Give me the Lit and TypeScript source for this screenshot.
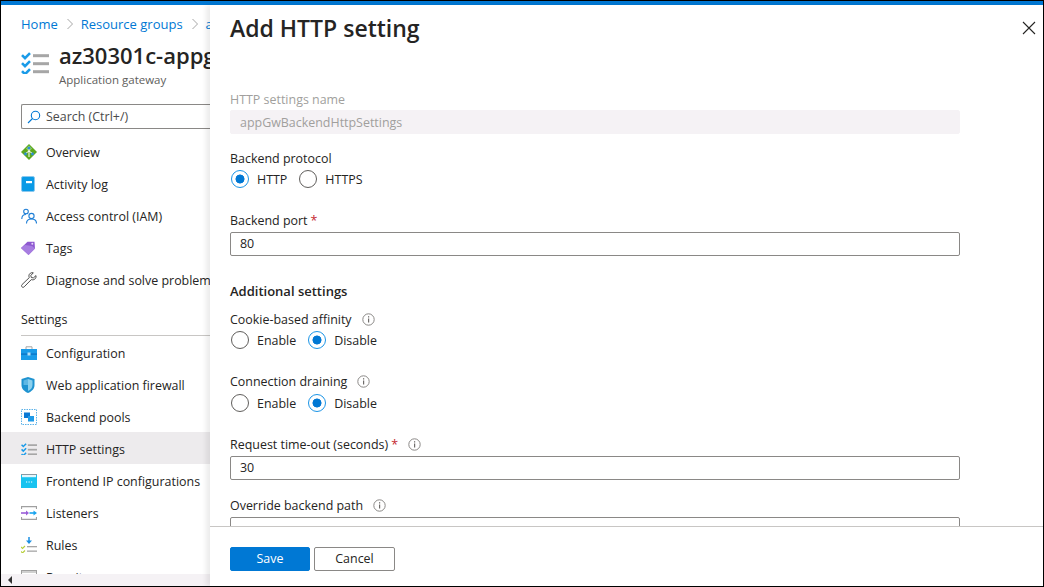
import { LitElement, html, css, svg } from 'lit';
import { customElement } from 'lit/decorators.js';

const checklist = (s: number) => html`<svg width=${s} height=${s * 0.8} viewBox="0 0 28 22">
  <g fill="none" stroke="#1a9be8" stroke-width="2.6">
    <path d="M1 3l3 3 5-5M1 11l3 3 5-5M1 19l3 3 5-5" />
  </g>
  <g fill="#a6a6a6">
    <rect x="12" y="2" width="16" height="3" /><rect x="12" y="10" width="16" height="3" /><rect x="12" y="18" width="16" height="3" />
  </g>
</svg>`;

const icons: Record<string, unknown> = {
  overview: html`<svg width="16" height="16" viewBox="0 0 16 16">
    <path d="M8 0l8 8-8 8-8-8z" fill="#5ca81e" />
    <path d="M8 1.500L11 4.500 8 8 5 4.500z" fill="#9bd35a" />
    <path d="M8 3v10M8 7L4.500 9.500M8 7l3.500 2.500" stroke="#fff" stroke-width="1" fill="none" />
    <circle cx="8" cy="4" r="1.600" fill="#2f8fd8" /><circle cx="4.500" cy="10" r="1.400" fill="#2f8fd8" /><circle cx="11.500" cy="10" r="1.400" fill="#2f8fd8" />
  </svg>`,
  activity: html`<svg width="14" height="16" viewBox="0 0 14 16">
    <rect x="0.500" y="0.500" width="13" height="15" rx="1.500" fill="#0a9ae6" stroke="#8cc8ee" />
    <rect x="5" y="5" width="6" height="2.200" fill="#fff" />
  </svg>`,
  iam: html`<svg width="16" height="16" viewBox="0 0 16 16" fill="none" stroke="#1f7fd6" stroke-width="1.100">
    <circle cx="5" cy="3.500" r="2.300" /><path d="M.8 11c0-3 1.800-4.500 4.200-4.500" />
    <circle cx="10.500" cy="8" r="2.600" /><path d="M5.500 15.500c0-3 2-4.500 5-4.500s5 1.500 5 4.500" />
  </svg>`,
  tags: html`<svg width="14" height="14" viewBox="0 0 14 14">
    <path d="M0 7L6.500.8 13.500 0.800 14 7.500 7.500 14z" fill="#8e58d0" />
    <path d="M0 7L7.500 14 14 7.500 11 5 4 4z" fill="#a77de0" />
    <circle cx="11.300" cy="2.800" r="1" fill="#e6d8f8" />
  </svg>`,
  wrench: html`<svg width="16" height="16" viewBox="0 0 16 16" fill="none" stroke="#3a3a3a" stroke-width="0.900">
    <path d="M15 3.600l-2.600 2.300-2.100-.4-.5-2L12.300.8C10.200.2 8 1.500 7.900 3.800c0 .7.100 1.200.4 1.800L1 12.600c-.8.900-.5 1.800 0 2.300s1.500.7 2.200-.1l7.100-7.200c2.600 1 5.300-1.100 4.700-4z" />
  </svg>`,
  config: html`<svg width="16" height="14" viewBox="0 0 16 14">
    <path d="M5 3V.8h6V3" fill="none" stroke="#a6a6a6" stroke-width="1" />
    <rect y="3" width="16" height="11" fill="#1a9be8" />
    <rect y="7.500" width="16" height="1.200" fill="#0b6fc0" />
    <rect x="6.500" y="6.500" width="3" height="3" fill="#b7e0f7" />
  </svg>`,
  waf: html`<svg width="14" height="16" viewBox="0 0 14 16">
    <path d="M7 0l6.500 2v6c0 4-3 6.500-6.500 8C3.500 14.500.5 12 .5 8V2z" fill="#1f93d0" />
    <path d="M7 2l4.500 1.500V8c0 3-2 4.700-4.500 6z" fill="#8bd0ee" />
    <path d="M2.500 3.500L7 2v6H2.500z" fill="#5fb8e4" />
  </svg>`,
  pools: html`<svg width="16" height="16" viewBox="0 0 16 16">
    <rect x="0.500" y="0.500" width="15" height="15" fill="none" stroke="#5cb2e8" stroke-dasharray="1.500 1" />
    <rect x="3" y="3.500" width="6" height="5.500" fill="#0a78d4" />
    <rect x="7" y="7" width="6" height="5.500" fill="#1f9be8" />
  </svg>`,
  http: checklist(16),
  frontend: html`<svg width="16" height="14" viewBox="0 0 16 14">
    <rect width="16" height="14" fill="#18c3f0" />
    <rect x="1" y="1" width="14" height="2.200" fill="#e6f7fd" />
    <rect y="0" width="16" height="1" fill="#8a9aa3" />
    <path d="M5 8h1.200M7.500 8h1.200M10 8h1.200" stroke="#fff" stroke-width="1.200" />
  </svg>`,
  listeners: html`<svg width="16" height="14" viewBox="0 0 16 14">
    <path d="M.5 3V.6h15V3M.5 11v2.400h15V11" fill="none" stroke="#a0a0a0" stroke-width="1.200" />
    <path d="M0 7h5.500" stroke="#9a5fd8" stroke-width="1.600" /><path d="M5 4.500L8 7l-3 2.500z" fill="#9a5fd8" />
    <path d="M8.500 7H13" stroke="#18a3ee" stroke-width="1.600" /><path d="M12.500 4.500L16 7l-3.500 2.500z" fill="#18a3ee" />
  </svg>`,
  rules: html`<svg width="16" height="16" viewBox="0 0 16 16">
    <path d="M8 0v5" stroke="#1a8fe3" stroke-width="1.500" /><path d="M5 3.500h6L8 7z" fill="#1a8fe3" />
    <path d="M0 10l1.500 1.500L4 9M0 14.500L1.500 16 4 13.500" fill="none" stroke="#b7cf3a" stroke-width="1.100" />
    <rect x="6" y="9" width="10" height="1.300" fill="#a6a6a6" /><rect x="6" y="13.500" width="10" height="1.300" fill="#a6a6a6" />
  </svg>`,
  rewrites: html`<svg width="16" height="14" viewBox="0 0 16 14">
    <rect x="0.500" y="0.500" width="15" height="13" fill="#fff" stroke="#a0a0a0" />
    <rect x="1" y="1" width="14" height="2" fill="#d0d0d0" />
  </svg>`,
};

const menuTop = [
  ['overview', 'Overview'],
  ['activity', 'Activity log'],
  ['iam', 'Access control (IAM)'],
  ['tags', 'Tags'],
  ['wrench', 'Diagnose and solve problems'],
];
const menuSettings = [
  ['config', 'Configuration'],
  ['waf', 'Web application firewall'],
  ['pools', 'Backend pools'],
  ['http', 'HTTP settings'],
  ['frontend', 'Frontend IP configurations'],
  ['listeners', 'Listeners'],
  ['rules', 'Rules'],
  ['rewrites', 'Rewrites'],
];

const info = svg`<svg class="info" width="13" height="13" viewBox="0 0 13 13">
  <circle cx="6.500" cy="6.500" r="5.700" fill="none" stroke="#8a8886" />
  <rect x="6" y="5.500" width="1.200" height="4" fill="#6e6c6a" /><rect x="6" y="3.200" width="1.200" height="1.300" fill="#6e6c6a" />
</svg>`;

@customElement('app-root')
export class AppRoot extends LitElement {
  static styles = css`
    :host {
      display: block;
      height: 587px;
      box-sizing: border-box;
      border: 1px solid #000;
      font-family: 'Open Sans', 'Noto Sans', sans-serif;
      font-size: 12.450px;
      color: #252423;
      background: #fff;
      overflow: hidden;
    }
    .topbar {
      height: 4px;
      background: #0078d4;
    }
    .main {
      display: flex;
      height: 581px;
    }
    /* left blade behind the panel */
    .blade {
      width: 209px;
      flex: none;
      display: flex;
      flex-direction: column;
      overflow: hidden;
      white-space: nowrap;
    }
    .crumbs {
      display: flex;
      align-items: center;
      padding: 10px 0 0 20px;
      height: 18px;
      color: #0078d4;
      font-size: 13px;
    }
    .chev {
      width: 6px;
      height: 10px;
      margin: 0 8px 0 9px;
      flex: none;
    }
    .head {
      display: flex;
      gap: 10px;
      padding: 9px 0 0 20px;
      height: 52px;
      box-sizing: border-box;
    }
    .head-icon {
      padding-top: 10px;
    }
    .head h1 {
      margin: 0;
      font-size: 22px;
      line-height: 27px;
      font-weight: 600;
      color: #252423;
    }
    .head p {
      margin: 3px 0 0;
      font-size: 11.500px;
      line-height: 15px;
      color: #605e5c;
    }
    .search {
      display: flex;
      align-items: center;
      gap: 5px;
      margin: 19px 0 0 20px;
      height: 23px;
      border: 1px solid #8a8886;
      border-right: none;
      border-radius: 2px 0 0 2px;
      padding-left: 5px;
      color: #4a4a4a;
    }
    .menu {
      padding-top: 6px;
      flex: 1;
      min-height: 0;
      overflow: hidden;
    }
    .item {
      display: flex;
      align-items: center;
      box-sizing: border-box;
      height: 32px;
      padding-top: 2px;
    }
    .item.active {
      background: #edebed;
    }
    .item-icon {
      width: 45px;
      padding-left: 20px;
      box-sizing: border-box;
      flex: none;
      display: flex;
      align-items: center;
    }
    .section {
      margin: 8px 0 0 20px;
      height: 33px;
      padding-top: 5px;
      line-height: 24px;
      box-sizing: border-box;
      border-bottom: 1px solid #c8c6c4;
      font-size: 12.500px;
    }
    .hscroll {
      height: 12px;
      flex: none;
      background: #f5f2f5;
      display: flex;
      align-items: center;
      padding-left: 7px;
    }
    .hscroll i {
      width: 0;
      height: 0;
      border: 4px solid transparent;
      border-right-color: #333;
      border-left: none;
    }
    /* slide-in panel */
    .panel {
      flex: 1;
      display: flex;
      flex-direction: column;
      min-width: 0;
      position: relative;
      box-shadow: -4px 0 5px rgba(0, 0, 0, 0.08);
    }
    .panel-head {
      display: flex;
      justify-content: space-between;
      align-items: center;
      height: 46px;
      padding: 0 7px 0 20px;
      flex: none;
    }
    .panel-head h2 {
      margin: 0;
      font-size: 23px;
      font-weight: 600;
      color: #252423;
    }
    .close {
      display: flex;
    }
    .form {
      flex: 1;
      min-height: 0;
      overflow: hidden;
      padding: 40px 0 0 20px;
      width: 730px;
    }
    label {
      display: flex;
      align-items: center;
      gap: 3px;
      height: 17px;
      line-height: 17px;
    }
    label.off {
      color: #a19f9d;
    }
    .req {
      color: #c4262e;
    }
    .info {
      margin-left: 7px;
    }
    .input {
      box-sizing: border-box;
      height: 24px;
      line-height: 22px;
      border: 1px solid #8a8886;
      border-radius: 2px;
      padding-left: 9px;
      margin-top: 3px;
      flex: none;
    }
    .input.off {
      margin-top: 2px;
      line-height: 23px;
      background: #f5f2f5;
      border-color: #f5f2f5;
      color: #a19f9d;
    }
    .radios {
      display: flex;
      gap: 12px;
      height: 18px;
      margin-top: 3px;
      padding-left: 1px;
    }
    .radio {
      display: flex;
      align-items: center;
      gap: 8px;
    }
    .dot {
      box-sizing: border-box;
      width: 18px;
      height: 18px;
      border: 1px solid #605e5c;
      border-radius: 50%;
    }
    .dot.on {
      border-color: #1a94e6;
      background: radial-gradient(circle, #0078d4 0 4.200px, #fff 4.800px);
    }
    .field {
      margin-top: 16px;
    }
    .field.after-radios {
      margin-top: 24px;
    }
    .field.after-radios .radios.low {
      margin-top: 4px;
    }
    .field.first {
      margin-top: 11px;
    }
    .field.last {
      margin-top: 17px;
    }
    .sub {
      margin: 0;
      font-size: 13px;
      font-weight: 600;
      line-height: 17px;
      margin-top: 27px;
    }
    .footer {
      height: 60px;
      flex: none;
      box-sizing: border-box;
      border-top: 1px solid #c8c6c4;
      display: flex;
      gap: 4px;
      padding: 20px 0 0 20px;
    }
    .btn {
      box-sizing: border-box;
      height: 24px;
      line-height: 22px;
      text-align: center;
      border-radius: 2px;
      border: 1px solid #8a8886;
    }
    .btn.primary {
      width: 80px;
      background: #0078d4;
      border-color: #0078d4;
      color: #fff;
    }
    .btn.plain {
      width: 81px;
    }
  `;

  private renderItem([icon, text]: string[]) {
    return html`<div class="item ${text === 'HTTP settings' ? 'active' : ''}">
      <span class="item-icon">${icons[icon]}</span><span>${text}</span>
    </div>`;
  }

  private renderRadios(options: string[], selected: string, low = false) {
    return html`<div class="radios ${low ? 'low' : ''}">
      ${options.map(
        (o) => html`<div class="radio"><span class="dot ${o === selected ? 'on' : ''}"></span>${o}</div>`
      )}
    </div>`;
  }

  render() {
    const chev = html`<svg class="chev" viewBox="0 0 6 10"><path d="M.5 0l5 5-5 5" fill="none" stroke="#a6a6a6" /></svg>`;
    return html`
      <div class="topbar"></div>
      <div class="main">
        <div class="blade">
          <div class="crumbs"><span>Home</span>${chev}<span>Resource groups</span>${chev}<span>az30301c</span></div>
          <div class="head">
            <span class="head-icon">${checklist(28)}</span>
            <div>
              <h1>az30301c-appgw</h1>
              <p>Application gateway</p>
            </div>
          </div>
          <div class="search">
            <svg width="14" height="14" viewBox="0 0 14 14" fill="none" stroke="#0078d4" stroke-width="1.100">
              <circle cx="8.500" cy="5.500" r="4.200" /><path d="M5.500 8.500L1 13" />
            </svg>
            Search (Ctrl+/)
          </div>
          <div class="menu">
            ${menuTop.map((m) => this.renderItem(m))}
            <div class="section">Settings</div>
            <div class="items">${menuSettings.map((m) => this.renderItem(m))}</div>
          </div>
          <div class="hscroll"><i></i></div>
        </div>
        <div class="panel">
          <div class="panel-head">
            <h2>Add HTTP setting</h2>
            <span class="close">
              <svg width="14" height="14" viewBox="0 0 14 14"><path d="M1 1l12 12M13 1L1 13" stroke="#252423" stroke-width="1.100" /></svg>
            </span>
          </div>
          <div class="form">
            <label class="off">HTTP settings name</label>
            <div class="input off">appGwBackendHttpSettings</div>
            <div class="field">
              <label>Backend protocol</label>
              ${this.renderRadios(['HTTP', 'HTTPS'], 'HTTP')}
            </div>
            <div class="field after-radios">
              <label>Backend port <span class="req">*</span></label>
              <div class="input">80</div>
            </div>
            <h3 class="sub">Additional settings</h3>
            <div class="field first">
              <label>Cookie-based affinity ${info}</label>
              ${this.renderRadios(['Enable', 'Disable'], 'Disable')}
            </div>
            <div class="field after-radios">
              <label>Connection draining ${info}</label>
              ${this.renderRadios(['Enable', 'Disable'], 'Disable', true)}
            </div>
            <div class="field after-radios">
              <label>Request time-out (seconds) <span class="req">*</span> ${info}</label>
              <div class="input">30</div>
            </div>
            <div class="field last">
              <label>Override backend path ${info}</label>
              <div class="input"></div>
            </div>
          </div>
          <div class="footer">
            <div class="btn primary">Save</div>
            <div class="btn plain">Cancel</div>
          </div>
        </div>
      </div>
    `;
  }
}
